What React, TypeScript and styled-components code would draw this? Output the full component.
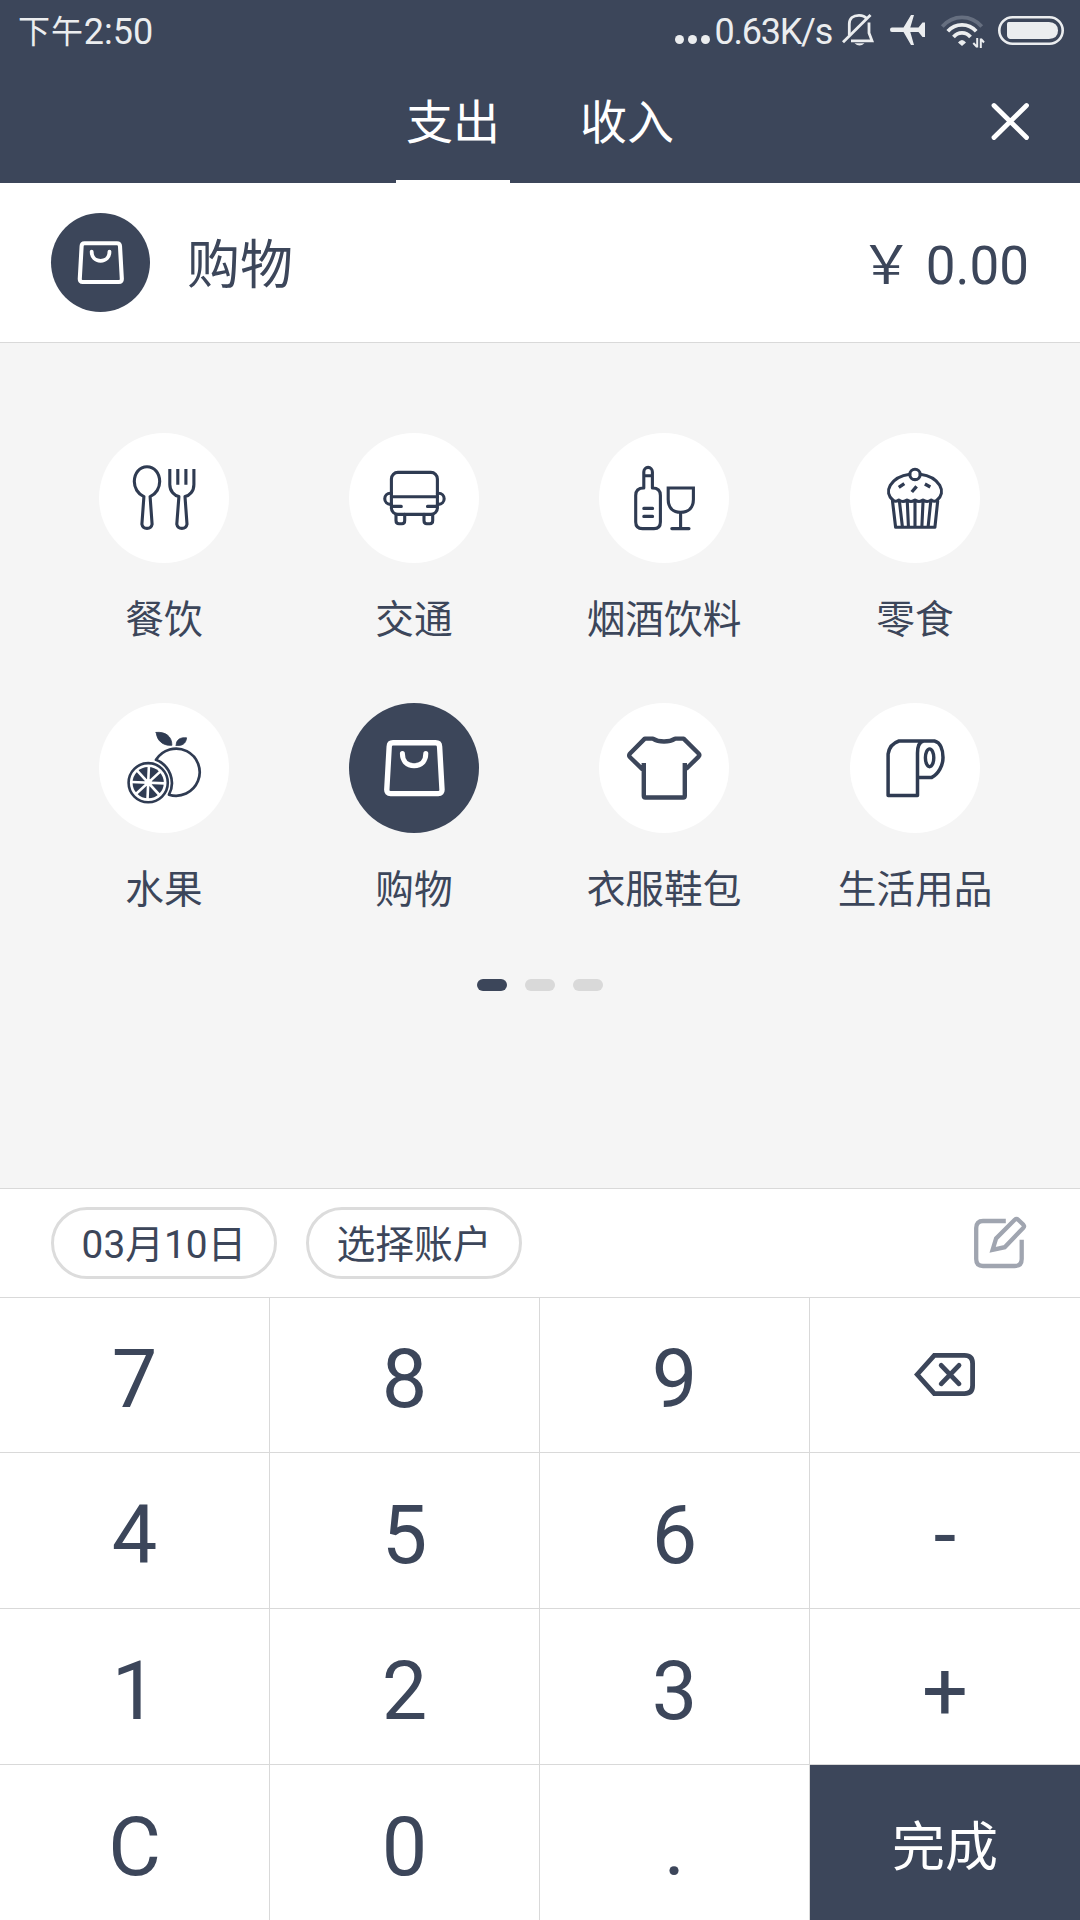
import React, { useState } from "react";
import styled, { createGlobalStyle } from "styled-components";

const navy = "#3c465a";
const ink = "#2f3b52";
const line = "#d9d9d9";
const statusTint = "#ebedef";

const GlobalStyle = createGlobalStyle`
  * { box-sizing: border-box; }
  body { margin: 0; background: #fff; }
  button { font: inherit; color: inherit; background: none; border: 0; padding: 0; margin: 0; }
  svg { display: block; }
`;

const Screen = styled.div`
  width: 1080px;
  height: 1920px;
  display: flex;
  flex-direction: column;
  overflow: hidden;
  background: #fff;
  color: ${navy};
  font-family: Roboto, "Noto Sans CJK SC", sans-serif;
`;

const StatusBar = styled.div`
  height: 60px;
  display: flex;
  justify-content: space-between;
  padding: 0 16px 0 18px;
  background: ${navy};
  color: ${statusTint};
  font-size: 36px;
  line-height: 64px;
`;

const Clock = styled.div`
  display: flex;
`;

const ClockPeriod = styled.span`
  font-size: 32px;
  letter-spacing: 0.9px;
`;

const StatusRight = styled.div`
  display: flex;
`;

const NetSpeed = styled.span`
  letter-spacing: -1.25px;
  padding-right: 1px;
`;

const Header = styled.header`
  height: 123px;
  display: grid;
  grid-template-columns: 1fr auto 1fr;
  background: ${navy};
  color: #fff;
`;

const Tabs = styled.nav`
  grid-column: 2;
  display: flex;
  gap: 60px;
`;

const Tab = styled.button<{ $active: boolean }>`
  width: 114px;
  border-bottom: 3px solid ${(p) => (p.$active ? "#fff" : "transparent")};
  font-size: 47px;
  line-height: 114px;
  padding-top: 6px;
  height: 123px;
  white-space: nowrap;
`;

const CloseButton = styled.button`
  justify-self: end;
  align-self: start;
  margin: 41px 49px 0 0;
`;

const Summary = styled.section`
  height: 160px;
  display: flex;
  align-items: center;
  padding: 0 51px;
  border-bottom: 1px solid ${line};
  font-size: 53px;
`;

const IconDisc = styled.div<{ $size: number; $active: boolean }>`
  width: ${(p) => p.$size}px;
  height: ${(p) => p.$size}px;
  border-radius: 50%;
  flex: none;
  background: ${(p) => (p.$active ? navy : "#fff")};
  color: ${(p) => (p.$active ? "#fff" : ink)};
`;

const SummaryName = styled.div`
  margin-left: 37px;
  padding-top: 7px;
  line-height: 60px;
`;

const Amount = styled.div`
  margin-left: auto;
  display: flex;
  gap: 13px;
  padding-top: 6px;
  line-height: 60px;
`;

const Categories = styled.main`
  height: 845px;
  padding: 90px 39px 0;
  background: #f5f5f5;
`;

const Grid = styled.div`
  display: grid;
  grid-template-columns: 250px 250px 250px 252px;
  grid-auto-rows: 270px;
`;

const Category = styled.div`
  display: flex;
  flex-direction: column;
  align-items: center;
`;

const CategoryLabel = styled.div`
  margin-top: 27px;
  font-size: 38.7px;
  line-height: 60px;
  white-space: nowrap;
`;

const Pager = styled.div`
  display: flex;
  justify-content: center;
  gap: 18px;
  margin-top: 6px;
`;

const PagerMark = styled.span<{ $active: boolean }>`
  width: 30px;
  height: 12px;
  border-radius: 6px;
  background: ${(p) => (p.$active ? navy : "#d9d9d9")};
`;

const Details = styled.section`
  height: 109px;
  display: flex;
  align-items: center;
  padding: 0 51px;
  gap: 29px;
  border-top: 1px solid ${line};
`;

const Pill = styled.button<{ $width: number }>`
  width: ${(p) => p.$width}px;
  height: 72px;
  border: 3px solid #dcdcdc;
  border-radius: 36px;
  font-size: 38.8px;
  line-height: 62px;
  padding-top: 4px;
  white-space: nowrap;
`;

const NoteButton = styled.button`
  margin-left: auto;
  color: #a0a5b0;
`;

const Keypad = styled.section`
  display: grid;
  grid-template-columns: repeat(4, 270px);
  grid-template-rows: 155px 156px 156px 156px;
`;

const Key = styled.button<{ $primary?: boolean; $last: boolean }>`
  display: flex;
  align-items: center;
  justify-content: center;
  border-top: 1px solid ${line};
  border-right: ${(p) => (p.$last ? "0" : `1px solid ${line}`)};
  padding-top: 10px;
  font-size: ${(p) => (p.$primary ? 53 : 81)}px;
  line-height: 90px;
  background: ${(p) => (p.$primary ? navy : "#fff")};
  color: ${(p) => (p.$primary ? "#fff" : navy)};
`;

const KeyIcon = styled.span`
  margin: -12px 2px 0 0;
`;

const Art = ({ children, size }: { children: React.ReactNode; size: number }) => (
  <svg
    width={size}
    height={size}
    viewBox="0 0 130 130"
    fill="none"
    stroke="currentColor"
    strokeWidth="3.1"
    strokeLinecap="round"
    strokeLinejoin="round"
  >
    {children}
  </svg>
);

const art: Record<string, React.ReactNode> = {
  dining: (
    <>
      <path d="M44.9 63.6C38.7 61 35.3 54.6 35.3 48.6C35.3 40 40.6 33.7 48 33.7S60.7 40 60.7 48.6C60.7 54.6 57.3 61 51.1 63.6L53.1 91.2A5.2 5.2 0 0 1 42.9 91.2L44.9 63.6" />
      <path
        strokeLinecap="butt"
        d="M70.8 36V51.5C70.8 58.5 75.5 62.6 79.9 63.6L77.8 91.2A5.2 5.2 0 0 0 88 91.2L86 63.6C90.5 62.6 94.9 58.5 94.9 51.5V36M78.8 36V51.8M86.9 36V51.8"
      />
    </>
  ),
  transport: (
    <>
      <rect x="42.4" y="39.4" width="46" height="42" rx="6.5" />
      <path d="M42.4 63.7H88.4M44 73.4H52.3M78.5 73.4H87M42.4 60.3H41.3A5.5 5.5 0 0 0 41.3 71.4H42.4M88.4 60.3H89.6A5.5 5.5 0 0 1 89.6 71.4H88.4" />
      <path d="M47 81.4V87.5Q47 90.7 50 90.7H53Q55.7 90.7 55.7 87.5V81.4M75 81.4V87.5Q75 90.7 77.8 90.7H80.8Q83.7 90.7 83.7 87.5V81.4" />
    </>
  ),
  drinks: (
    <>
      <path d="M44.8 55V39A4.3 4.6 0 0 1 53.4 39V55C58.5 55 61.4 57.5 61.4 62.5V89C61.4 93.5 59.5 95.6 55 95.6H43.5C38.5 95.6 36.7 93.5 36.7 89V62.5C36.7 57.5 39.5 55 44.8 55M44.8 42.8H53.4M44.8 75.4H53.6M44.8 83.4H53.6" />
      <path strokeLinejoin="miter" d="M69.2 55H94.4V66.5C94.4 75 89 79.3 81.6 79.3S69.2 75 69.2 66.5ZM81.6 79.3V95.6M72.8 95.6H90" />
    </>
  ),
  snacks: (
    <>
      <circle cx="65" cy="41.4" r="5.2" />
      <path d="M43 67.2C38.4 63.5 37 58 40.3 52.3C43.8 46.5 51 42.3 59.8 41.2M70.2 41.2C79 42.3 86.2 46.5 89.7 52.3C93 58 91.6 63.5 87 67.2" />
      <path d="M42.5 67Q45.5 69.5 48.8 67Q53 70 57 67Q61 70 65 67Q69 70 73 67Q77 70 81.2 67Q84.5 69.5 87.5 67" />
      <path d="M42.5 68L45.6 94.3H84.9L87.7 68M49.5 69L52.3 93M57.3 69L58.4 93M65 69V93M73 69L71.9 93M80.7 69L78.2 93" />
      <path strokeWidth="3.4" strokeLinecap="butt" d="M48.8 54.3L54.3 50.6M74.9 50.9L80.3 53.9M61.8 59L66.6 53.4" />
    </>
  ),
  fruit: (
    <>
      <path strokeWidth="2.7" d="M57 56.8A23.6 23.6 0 1 1 70 91.7A25 25 0 0 0 57 56.8Z" />
      <circle cx="49.2" cy="79.7" r="19.6" strokeWidth="2.6" />
      <circle cx="49.2" cy="79.7" r="15.6" fill="currentColor" stroke="none" />
      <path stroke="#fff" strokeWidth="2.6" strokeLinecap="butt" d="M49.9 63L48.5 96.4M32.5 79L65.9 80.4M37.9 67.4L60.5 92M61.5 68.4L36.9 91" />
      <circle cx="49.2" cy="79.7" r="3.6" fill="#fff" stroke="none" />
      <path strokeWidth="0.8" fill="currentColor" d="M57.2 29.4C66 28.5 73 33 72.9 42.3C64.5 43 57.8 38 57.2 29.4ZM77.2 42.3C77 36.8 81 34.2 87.6 34.8C87 40.6 83 43.4 77.2 42.3Z" />
    </>
  ),
  shopping: (
    <>
      <path strokeWidth="5.4" d="M44 39.8H86.6Q90.4 39.8 90.6 43.6L93 86.3Q93.2 90.6 89.2 90.6H41.6Q37.6 90.6 37.8 86.3L40.2 43.6Q40.4 39.8 44 39.8Z" />
      <path strokeWidth="5" d="M53.4 50.6C53.4 58 58 62.8 65.1 62.8S76.8 58 76.8 50.6" />
    </>
  ),
  clothes: (
    <path
      stroke={navy}
      strokeWidth="4.4"
      strokeLinecap="butt"
      d="M85.8 60V92.8Q85.8 94.5 84.3 94.5H46.3Q44.8 94.5 44.8 92.8V60M44.8 64.5L43 65.8L30.8 54Q29.6 52.5 30.8 50.8L45.8 35.6H53.8C60 39.4 70 39.4 76.2 35.6H84.6L99.6 50.5Q101 52 99.6 53.6L87.8 65.3L85.8 63.5"
    />
  ),
  household: (
    <>
      <path strokeWidth="3.5" d="M73.5 38C69.5 39 67.5 43.5 67.5 50V92.6H38.1V51C39 44.5 43 40 49 38H84.5C90.5 39.5 93 47 93 54.5C93 62.5 88.5 71 81.8 74.4H67.5" />
      <ellipse cx="79.6" cy="54.8" rx="4.2" ry="8.9" strokeWidth="3.4" />
    </>
  ),
};

const categories = [
  { id: "dining", label: "餐饮" },
  { id: "transport", label: "交通" },
  { id: "drinks", label: "烟酒饮料" },
  { id: "snacks", label: "零食" },
  { id: "fruit", label: "水果" },
  { id: "shopping", label: "购物" },
  { id: "clothes", label: "衣服鞋包" },
  { id: "household", label: "生活用品" },
];

const keys = ["7", "8", "9", "back", "4", "5", "6", "-", "1", "2", "3", "+", "C", "0", ".", "完成"];

const StatusIcons = () => (
  <svg width="231" height="60" viewBox="833 0 231 60" fill="none" stroke={statusTint}>
    <g strokeWidth="2.8">
      <path d="M849.3 35V24C849.3 18.5 853 15.3 859 15.3C862.5 15.3 865.3 16.6 867 18.8M869 22.5V33L872 40.8H851" />
      <path d="M843 42.3L870.5 15" />
      <path d="M854.5 43.2H864.5Q859.5 48 854.5 43.2Z" fill={statusTint} stroke="none" />
    </g>
    <path
      fill={statusTint}
      stroke="none"
      d="M892 27.6H903.5L911 15H914L910.3 27.6H918.5L922.5 22.5H925V37H922.5L918.5 32H910.3L914 45H911L903.5 32H892Q890 32 890 29.8T892 27.6Z"
    />
    <g strokeWidth="3.7">
      <path d="M942.3 26.5C953 14.3 971 14.3 981.7 26.5" stroke="#666f80" strokeWidth="3.8" />
      <path d="M947.8 31.3C955.5 22.8 968.5 22.8 976.2 31.3" />
      <path d="M953.5 37C958 31.6 966 31.6 970.5 37" />
      <path d="M958 42.5Q962 37.5 966 42.5L962 46Z" fill={statusTint} stroke="none" />
      <path d="M977.2 38V47.5M973.3 43L977 47M980.8 48V38.5M984 42.5L981 39" strokeWidth="2" />
    </g>
    <rect x="999.3" y="17.3" width="63.4" height="26.4" rx="13.2" strokeWidth="2.6" />
    <path d="M1008.5 22H1049Q1058 22.5 1058 30.5T1049 39H1010Q1007 38 1007 35V24Q1007 22 1008.5 22Z" fill={statusTint} stroke="none" />
  </svg>
);

const SignalDots = () => (
  <svg width="40" height="60" viewBox="675 0 40 60" fill={statusTint}>
    <circle cx="679.5" cy="39.5" r="4.5" />
    <circle cx="692.5" cy="39.5" r="4.5" />
    <circle cx="705.5" cy="39.5" r="4.5" />
  </svg>
);

const BackspaceIcon = () => (
  <svg width="61" height="43" viewBox="0 0 61 43" fill="none" stroke="currentColor" strokeWidth="4.8">
    <path d="M3.2 21.5L20.3 2.4H50.5Q58.6 2.4 58.6 10.5V32.5Q58.6 40.6 50.5 40.6H20.3Z" />
    <path d="M27.2 12.3L45 30.8M45 12.3L27.2 30.8" strokeLinecap="round" />
  </svg>
);

const NoteIcon = () => (
  <svg width="55" height="54" viewBox="0 0 55 54" fill="none" stroke="currentColor" strokeWidth="4.3">
    <path d="M31.8 5H9Q2.2 5 2.2 12V43Q2.2 50 9 50H40.7Q47.7 50 47.7 43V23.8" />
    <path d="M18.6 33.9L22.1 22.4L40.7 3.8Q42.5 2.2 44.2 3.8L49.4 8.8Q50.8 10.4 49.2 12L30.7 31.2Z" />
  </svg>
);

export default function App() {
  const [selected, setSelected] = useState("shopping");
  const current = categories.find((c) => c.id === selected)!;
  return (
    <Screen>
      <GlobalStyle />
      <StatusBar>
        <Clock>
          <ClockPeriod>下午</ClockPeriod>2:50
        </Clock>
        <StatusRight>
          <SignalDots />
          <NetSpeed>0.63K/s</NetSpeed>
          <StatusIcons />
        </StatusRight>
      </StatusBar>
      <Header>
        <Tabs>
          <Tab $active>支出</Tab>
          <Tab $active={false}>收入</Tab>
        </Tabs>
        <CloseButton aria-label="关闭">
          <svg width="41" height="41" viewBox="0 0 41 41" stroke="#fff" strokeWidth="4.8" strokeLinecap="round">
            <path d="M4 4.5L36.5 36.5M36.5 4.5L4 36.5" />
          </svg>
        </CloseButton>
      </Header>
      <Summary>
        <IconDisc $size={99} $active>
          <Art size={99}>{art[selected]}</Art>
        </IconDisc>
        <SummaryName>{current.label}</SummaryName>
        <Amount>
          <span>￥</span>
          <span>0.00</span>
        </Amount>
      </Summary>
      <Categories>
        <Grid>
          {categories.map((c) => (
            <Category key={c.id} onClick={() => setSelected(c.id)}>
              <IconDisc $size={130} $active={c.id === selected}>
                <Art size={130}>{art[c.id]}</Art>
              </IconDisc>
              <CategoryLabel>{c.label}</CategoryLabel>
            </Category>
          ))}
        </Grid>
        <Pager>
          <PagerMark $active />
          <PagerMark $active={false} />
          <PagerMark $active={false} />
        </Pager>
      </Categories>
      <Details>
        <Pill $width={226}>03月10日</Pill>
        <Pill $width={216}>选择账户</Pill>
        <NoteButton aria-label="备注">
          <NoteIcon />
        </NoteButton>
      </Details>
      <Keypad>
        {keys.map((k, i) => (
          <Key key={k} $primary={k === "完成"} $last={i % 4 === 3}>
            {k === "back" ? (
              <KeyIcon>
                <BackspaceIcon />
              </KeyIcon>
            ) : (
              k
            )}
          </Key>
        ))}
      </Keypad>
    </Screen>
  );
}
